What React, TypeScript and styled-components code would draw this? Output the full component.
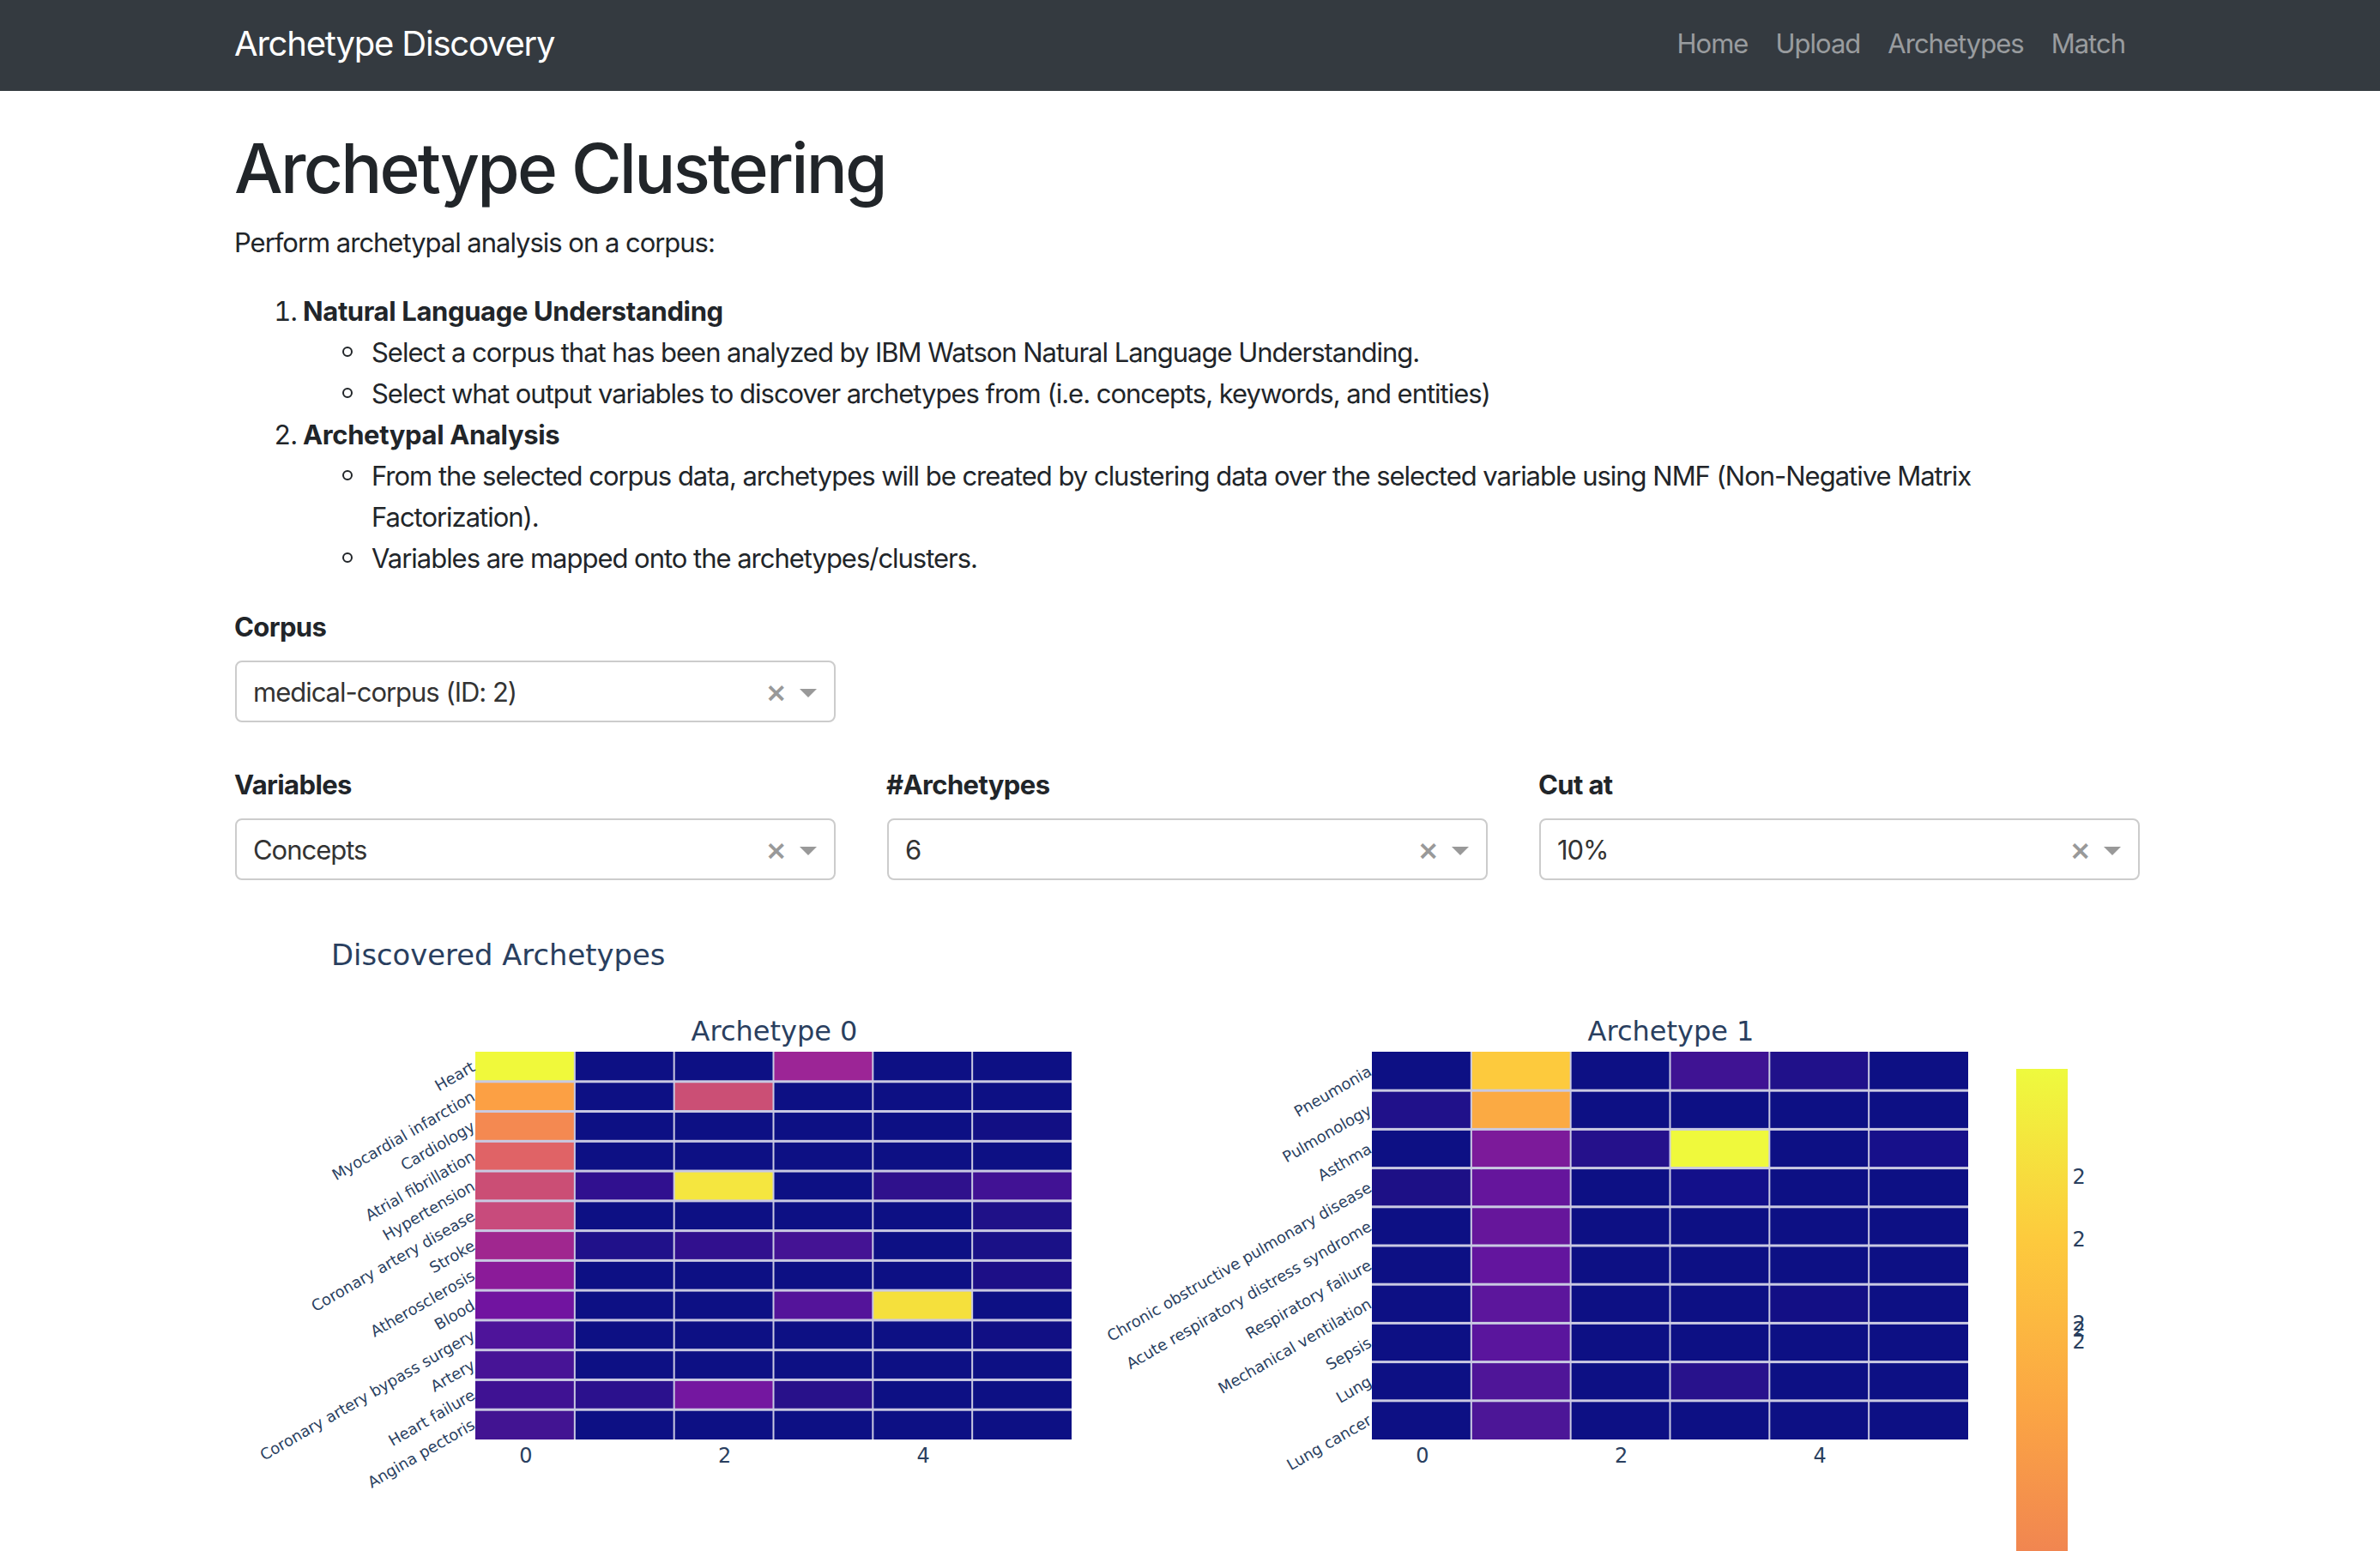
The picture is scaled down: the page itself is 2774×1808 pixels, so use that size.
import React from 'react'
import styled, { createGlobalStyle } from 'styled-components'

const GlobalStyle = createGlobalStyle`
  html, body {
    margin: 0;
    padding: 0;
    background: #fff;
    overflow: hidden;
  }
  body {
    font-family: Inter, "Liberation Sans", sans-serif;
    font-size: 31px;
    line-height: 48px;
    color: #212529;
    letter-spacing: -0.033em;
  }
  strong {
    letter-spacing: -0.012em;
  }
`

const Navbar = styled.nav`
  height: 106px;
  background: #343a40;
  padding: 0 281px 4px 273px;
  display: flex;
  align-items: center;
  justify-content: space-between;
  box-sizing: border-box;
`

const Brand = styled.a`
  font-size: 40px;
  color: #fff;
  letter-spacing: -0.03em;
`

const NavLinks = styled.div`
  display: flex;
  gap: 32px;
  padding-right: 16px;
`

const NavLink = styled.a`
  color: rgba(255, 255, 255, 0.5);
  letter-spacing: -0.032em;
`

const Container = styled.main`
  width: 2220px;
  margin-left: 273px;
`

const Title = styled.h1`
  margin: 42px 0 15px;
  font-size: 80px;
  line-height: 96px;
  font-weight: 500;
  letter-spacing: -0.034em;
`

const Intro = styled.p`
  margin: 0 0 32px;
`

const Steps = styled.ol`
  margin: 0 0 33px;
  padding-left: 80px;
`

const SubSteps = styled.ul`
  margin: 0;
  padding: 0 100px 0 80px;
  list-style: none;
`

const SubStep = styled.li`
  position: relative;

  &::before {
    content: '';
    position: absolute;
    left: -34px;
    top: 17px;
    width: 8px;
    height: 8px;
    border: 2px solid #212529;
    border-radius: 50%;
  }
`

const FormRow = styled.div<{ $top: number }>`
  display: grid;
  grid-template-columns: repeat(3, 700px);
  column-gap: 60px;
  margin: ${({ $top }) => $top}px 0 0 1px;
`

const Label = styled.label`
  display: block;
  font-weight: 700;
  letter-spacing: -0.02em;
  margin: -1px 0 15px -1px;
`

const SelectBox = styled.div`
  height: 72px;
  box-sizing: border-box;
  border: 2px solid #ccc;
  border-radius: 8px;
  padding: 2px 20px 0 19px;
  display: flex;
  align-items: center;
  color: #333;
`

const SelectValue = styled.span`
  flex: 1;
`

const Clear = styled.span`
  color: #999;
  font-size: 38px;
  font-weight: 500;
  line-height: 44px;
  width: 24px;
  text-align: center;
  margin: -4px 16px 0 -2px;
`

const Arrow = styled.span`
  width: 0;
  height: 0;
  margin-top: 2px;
  border-style: solid;
  border-width: 10px 10px 0;
  border-color: #999 transparent transparent;
`

const Chart = styled.svg`
  display: block;
  margin-top: 54px;
`

const PlotTitle = styled.text`
  font-family: "DejaVu Sans", sans-serif;
  font-size: 33.8px;
  letter-spacing: 0;
  fill: #2a3f5f;
`

const SubTitle = styled.text`
  font-family: "DejaVu Sans", sans-serif;
  font-size: 32px;
  letter-spacing: 0;
  fill: #2a3f5f;
  text-anchor: middle;
`

const Tick = styled.text`
  font-family: "DejaVu Sans", sans-serif;
  font-size: 24px;
  letter-spacing: 0;
  fill: #2a3f5f;
`

const RowTick = styled.text`
  font-family: "DejaVu Sans", sans-serif;
  font-size: 18px;
  letter-spacing: 0;
  fill: #2a3f5f;
  text-anchor: end;
`

function Select({ label, value }: { label: string; value: string }) {
  return (
    <div>
      <Label>{label}</Label>
      <SelectBox>
        <SelectValue>{value}</SelectValue>
        <Clear>×</Clear>
        <Arrow />
      </SelectBox>
    </div>
  )
}

const n = '#0d1084'

const archetype0 = {
  labels: ['Heart', 'Myocardial infarction', 'Cardiology', 'Atrial fibrillation', 'Hypertension', 'Coronary artery disease', 'Stroke', 'Atherosclerosis', 'Blood', 'Coronary artery bypass surgery', 'Artery', 'Heart failure', 'Angina pectoris'],
  cells: [
    ['#f0f93b', n, n, '#9c2596', n, n],
    ['#fca044', n, '#cb4f75', n, n, n],
    ['#f48951', n, n, n, n, '#120f84'],
    ['#e06366', n, n, n, n, n],
    ['#cb4e75', '#30108f', '#f5e63f', n, '#2f118c', '#411294'],
    ['#c84b7c', n, n, n, n, '#1f1188'],
    ['#a0278f', '#20118a', '#31108e', '#441394', n, '#1a1187'],
    ['#8b1b99', n, n, n, n, '#1d0f87'],
    ['#7114a0', n, n, '#54149a', '#f5e03c', n],
    ['#4e149a', n, n, n, n, '#110f84'],
    ['#471496', n, n, n, n, n],
    ['#3f1293', '#2b118d', '#7417a0', '#28118a', n, n],
    ['#421492', n, n, n, n, n],
  ],
}

const archetype1 = {
  labels: ['Pneumonia', 'Pulmonology', 'Asthma', 'Chronic obstructive pulmonary disease', 'Acute respiratory distress syndrome', 'Respiratory failure', 'Mechanical ventilation', 'Sepsis', 'Lung', 'Lung cancer'],
  cells: [
    [n, '#fdca3d', n, '#3f1393', '#20118a', n],
    ['#20118a', '#fbaa43', n, n, n, n],
    [n, '#7c1a9a', '#25118b', '#eff93c', n, '#17108a'],
    ['#1d1086', '#65159c', n, '#13108a', n, n],
    [n, '#66169b', n, n, n, n],
    [n, '#63159e', n, n, n, n],
    [n, '#5c169c', n, n, '#130f85', n],
    [n, '#5a159d', n, n, n, n],
    [n, '#4f1598', n, '#28128c', n, n],
    [n, '#4c1697', n, n, n, n],
  ],
}

const PLOT_TOP = 1226
const PLOT_HEIGHT = 452
const PLOT_WIDTH = 695

function Heatmap({ x, title, data }: { x: number; title: string; data: typeof archetype0 }) {
  const cw = PLOT_WIDTH / 6
  const rh = PLOT_HEIGHT / data.cells.length

  return (
    <g>
      <SubTitle x={x + PLOT_WIDTH / 2 + 1} y={1213}>{title}</SubTitle>
      {data.cells.map((row, r) =>
        row.map((fill, c) => (
          <rect key={`${r}-${c}`} x={x + c * cw} y={PLOT_TOP + r * rh} width={cw} height={rh} fill={fill} />
        )),
      )}
      {data.cells.slice(1).map((_, r) => (
        <rect key={r} x={x} y={PLOT_TOP + (r + 1) * rh - 1.5} width={PLOT_WIDTH} height={3} fill="#c9c9e2" />
      ))}
      {[1, 2, 3, 4, 5].map((c) => (
        <rect key={c} x={x + c * cw - 1} y={PLOT_TOP} width={2} height={PLOT_HEIGHT} fill="#c9c9e2" />
      ))}
      {data.labels.map((label, r) => {
        const ly = PLOT_TOP + (r + 0.5) * rh + 4
        return (
          <RowTick key={label} x={x + 1} y={ly} transform={`rotate(-30 ${x + 1} ${ly})`}>
            {label}
          </RowTick>
        )
      })}
      {[0, 2, 4].map((c) => (
        <Tick key={c} x={x + (c + 0.5) * cw + 1} y={1705} textAnchor="middle">{c}</Tick>
      ))}
    </g>
  )
}

function ArchetypeChart() {
  return (
    <Chart width={2220} height={728} viewBox="273 1080 2220 728">
      <defs>
        <linearGradient id="plasma" gradientUnits="userSpaceOnUse" x1="0" y1="1246" x2="0" y2="1843">
          <stop offset="0" stopColor="#eefa3e" />
          <stop offset="0.333" stopColor="#fdca3d" />
          <stop offset="0.667" stopColor="#fba544" />
          <stop offset="1" stopColor="#ef7f53" />
        </linearGradient>
      </defs>
      <PlotTitle x={386} y={1125}>Discovered Archetypes</PlotTitle>
      <Heatmap x={554} title="Archetype 0" data={archetype0} />
      <Heatmap x={1599} title="Archetype 1" data={archetype1} />
      <rect x={2350} y={1246} width={60} height={562} fill="url(#plasma)" />
      {[1380, 1453, 1551, 1558, 1572].map((y) => (
        <Tick key={y} x={2415.5} y={y}>2</Tick>
      ))}
    </Chart>
  )
}

export default function App() {
  return (
    <>
      <GlobalStyle />
      <Navbar>
        <Brand>Archetype Discovery</Brand>
        <NavLinks>
          <NavLink>Home</NavLink>
          <NavLink>Upload</NavLink>
          <NavLink>Archetypes</NavLink>
          <NavLink>Match</NavLink>
        </NavLinks>
      </Navbar>
      <Container>
        <Title>Archetype Clustering</Title>
        <Intro>Perform archetypal analysis on a corpus:</Intro>
        <Steps>
          <li>
            <strong>Natural Language Understanding</strong>
            <SubSteps>
              <SubStep>Select a corpus that has been analyzed by IBM Watson Natural Language Understanding.</SubStep>
              <SubStep>Select what output variables to discover archetypes from (i.e. concepts, keywords, and entities)</SubStep>
            </SubSteps>
          </li>
          <li>
            <strong>Archetypal Analysis</strong>
            <SubSteps>
              <SubStep>From the selected corpus data, archetypes will be created by clustering data over the selected variable using NMF (Non-Negative Matrix Factorization).</SubStep>
              <SubStep>Variables are mapped onto the archetypes/clusters.</SubStep>
            </SubSteps>
          </li>
        </Steps>
        <FormRow $top={0}>
          <Select label="Corpus" value="medical-corpus (ID: 2)" />
        </FormRow>
        <FormRow $top={50}>
          <Select label="Variables" value="Concepts" />
          <Select label="#Archetypes" value="6" />
          <Select label="Cut at" value="10%" />
        </FormRow>
        <ArchetypeChart />
      </Container>
    </>
  )
}
